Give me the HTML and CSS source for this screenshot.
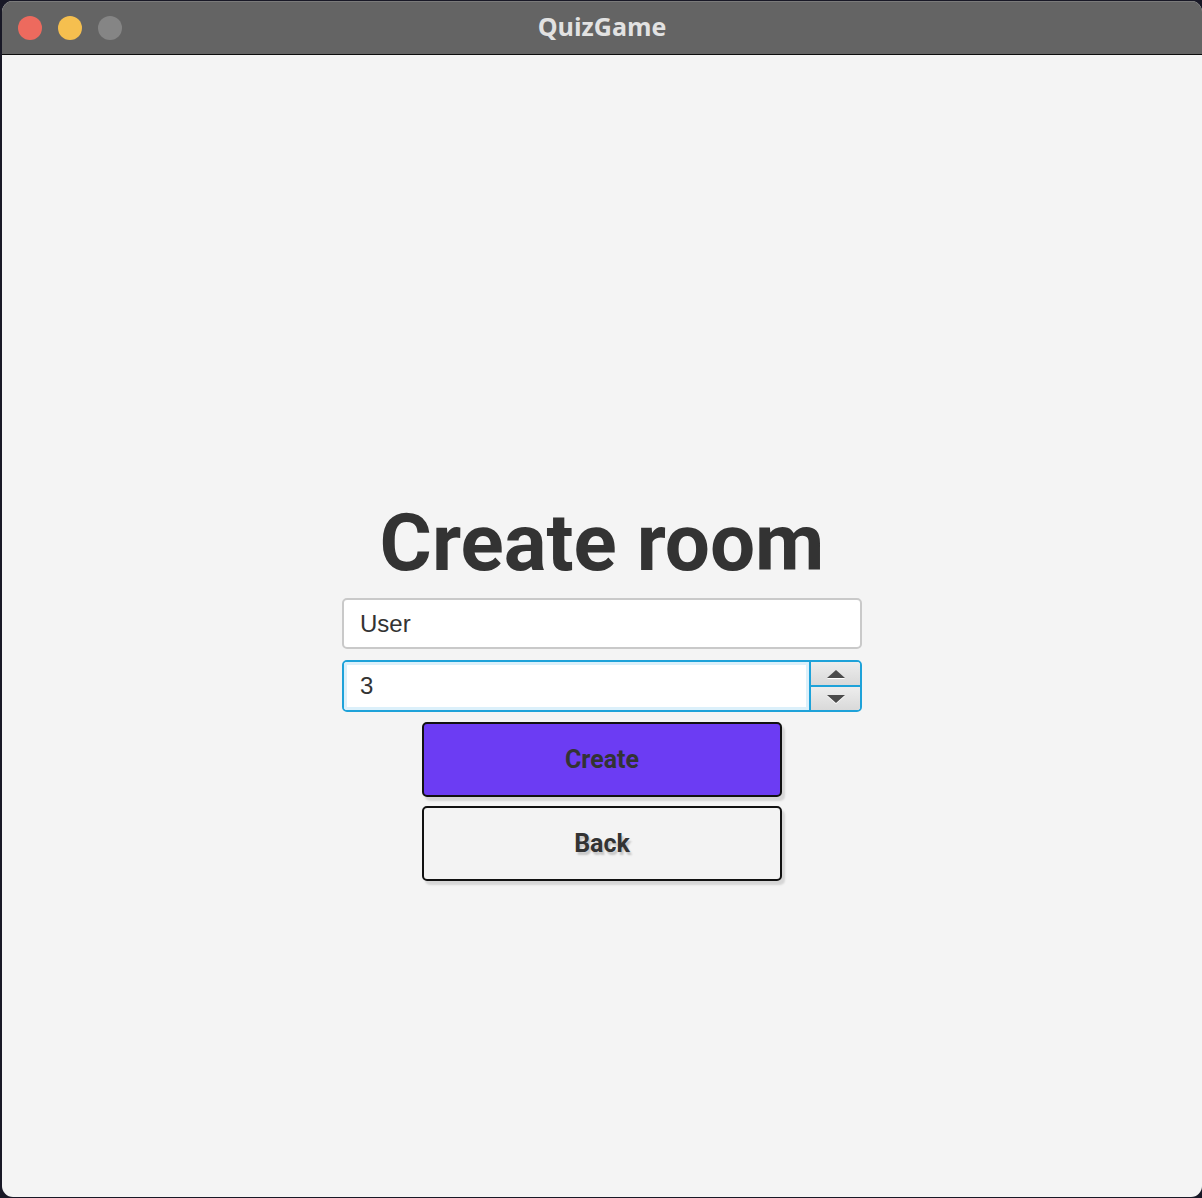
FILE: index.html
```html
<!DOCTYPE html>
<html lang="en">
<head>
<meta charset="utf-8">
<title>QuizGame</title>
<link rel="stylesheet" href="styles.css">
</head>
<body>
<div class="window">
  <header class="titlebar">
    <div class="lights">
      <span class="light red"></span>
      <span class="light yellow"></span>
      <span class="light gray"></span>
    </div>
    <div class="title">QuizGame</div>
  </header>
  <main class="content">
    <h1 class="heading">Create room</h1>
    <div class="field">User</div>
    <div class="spinner">
      <div class="spinner-value">3</div>
      <div class="spinner-arrows">
        <div class="arrow-btn"><span class="tri up"></span></div>
        <div class="arrow-btn"><span class="tri down"></span></div>
      </div>
    </div>
    <button class="btn btn-primary">Create</button>
    <button class="btn btn-back">Back</button>
  </main>
</div>
</body>
</html>
```
FILE: styles.css
```css
html, body {
  margin: 0;
  padding: 0;
  background: #181826;
}
body {
  width: 1202px;
  height: 1198px;
  overflow: hidden;
}
.window {
  width: 1200px;
  height: 1196px;
  margin: 1px 0 1px 2px;
  border-radius: 11px;
  overflow: hidden;
  background: #f4f4f4;
  display: flex;
  flex-direction: column;
}
.titlebar {
  height: 53px;
  background: #646464;
  border-bottom: 1px solid #0c0c0c;
  display: flex;
  align-items: center;
  position: relative;
  box-shadow: inset 0 1px 0 #7a7a7a;
}
.lights {
  display: flex;
  gap: 16px;
  padding-left: 16px;
}
.light {
  width: 24px;
  height: 24px;
  border-radius: 50%;
}
.red { background: #ed6a5e; }
.yellow { background: #f5bf4f; }
.gray { background: #858585; }
.title {
  position: absolute;
  left: 0;
  right: 0;
  top: 0;
  height: 53px;
  line-height: 51px;
  text-align: center;
  color: #e2e2e2;
  font-family: "Open Sans", "Liberation Sans", sans-serif;
  font-weight: 700;
  font-size: 25px;
}
.content {
  flex: 1;
  display: flex;
  flex-direction: column;
  align-items: center;
  padding-top: 448px;
}
.heading {
  margin: 0;
  font-family: Roboto, "Liberation Sans", sans-serif;
  font-weight: 700;
  font-size: 80px;
  line-height: 80px;
  color: #333333;
}
.field {
  margin-top: 15px;
  box-sizing: border-box;
  width: 520px;
  height: 51px;
  background: #fff;
  border: 2px solid #c9c9c9;
  border-radius: 5px;
  padding-left: 16px;
  display: flex;
  align-items: center;
  font-family: "Liberation Sans", Arial, sans-serif;
  font-size: 24px;
  color: #333;
}
.spinner {
  margin-top: 11px;
  box-sizing: border-box;
  width: 520px;
  height: 52px;
  border: 2px solid #1ea2d9;
  border-radius: 5px;
  background: #fff;
  display: flex;
  overflow: hidden;
}
.spinner-value {
  flex: 1;
  box-shadow: inset 0 0 0 3px #dcf0fa;
  display: flex;
  align-items: center;
  padding-left: 16px;
  font-family: "Liberation Sans", Arial, sans-serif;
  font-size: 24px;
  color: #333;
}
.spinner-arrows {
  width: 49px;
  border-left: 2px solid #1ea2d9;
  display: flex;
  flex-direction: column;
}
.arrow-btn {
  flex: 1;
  background: linear-gradient(#ededed, #d9d9d9);
  display: flex;
  align-items: center;
  justify-content: center;
}
.arrow-btn + .arrow-btn {
  border-top: 2px solid #1ea2d9;
}
.tri {
  width: 0;
  height: 0;
  border-left: 9px solid transparent;
  border-right: 9px solid transparent;
}
.tri.up {
  border-bottom: 8px solid #4a4a4a;
  filter: drop-shadow(0 1px 0 #ffffff);
}
.tri.down {
  border-top: 8px solid #4a4a4a;
  filter: drop-shadow(0 1px 0 #ffffff);
}
.btn {
  box-sizing: border-box;
  width: 360px;
  height: 75px;
  border: 2px solid #111;
  border-radius: 5px;
  font-family: Roboto, "Liberation Sans", sans-serif;
  font-weight: 700;
  font-size: 25px;
  color: #333;
  box-shadow: 3px 4px 2px #d6d6d6;
  padding: 0;
}
.btn-primary {
  margin-top: 10px;
  background: #6c3cf3;
}
.btn-back {
  margin-top: 9px;
  background: #f3f3f3;
  text-shadow: 2px 3px 2px #c6c6c6;
}
```
